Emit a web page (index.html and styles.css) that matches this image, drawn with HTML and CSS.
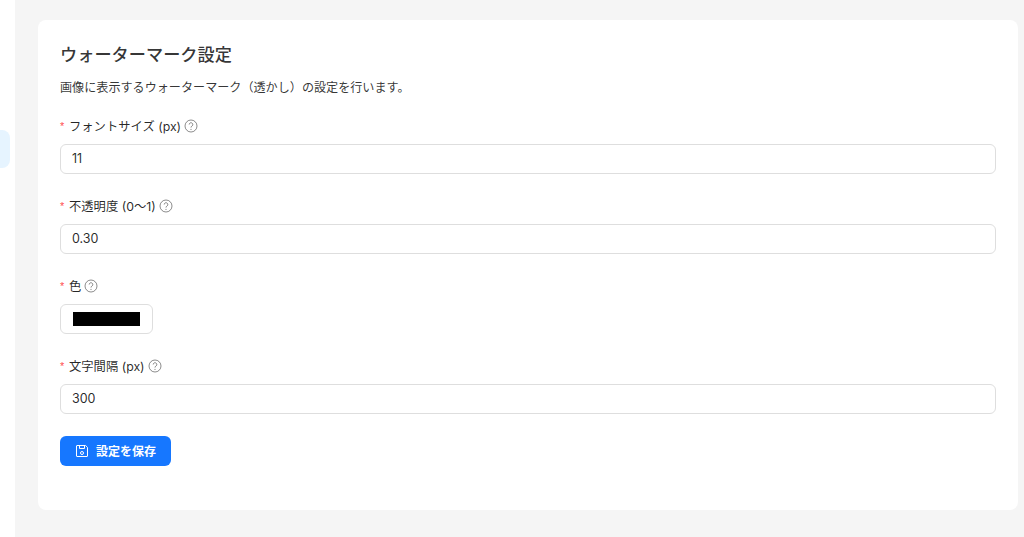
FILE: index.html
```html
<!DOCTYPE html>
<html lang="ja">
<head>
  <meta charset="UTF-8" />
  <title>ウォーターマーク設定</title>
  <link rel="stylesheet" href="styles.css">
</head>
<body>
  <div class="layout">
    <aside class="sider">
      <div class="menu-active"></div>
    </aside>
    <main class="content">
      <div class="card">
        <h2>ウォーターマーク設定</h2>
        <p class="desc">画像に表示するウォーターマーク（透かし）の設定を行います。</p>

        <div class="field">
          <div class="label">
            <span class="req">*</span>フォントサイズ (px)
            <svg class="help" viewBox="0 0 14 14"><circle cx="7" cy="7" r="6" /><path d="M5.2 5.5a1.8 1.8 0 1 1 2.7 1.6c-.6.3-.9.7-.9 1.3v.2" /><circle class="dot" cx="7" cy="10.4" r=".6" /></svg>
          </div>
          <input class="input" type="text" value="11">
        </div>

        <div class="field">
          <div class="label">
            <span class="req">*</span>不透明度 (0〜1)
            <svg class="help" viewBox="0 0 14 14"><circle cx="7" cy="7" r="6" /><path d="M5.2 5.5a1.8 1.8 0 1 1 2.7 1.6c-.6.3-.9.7-.9 1.3v.2" /><circle class="dot" cx="7" cy="10.4" r=".6" /></svg>
          </div>
          <input class="input" type="text" value="0.30">
        </div>

        <div class="field">
          <div class="label">
            <span class="req">*</span>色
            <svg class="help" viewBox="0 0 14 14"><circle cx="7" cy="7" r="6" /><path d="M5.2 5.5a1.8 1.8 0 1 1 2.7 1.6c-.6.3-.9.7-.9 1.3v.2" /><circle class="dot" cx="7" cy="10.4" r=".6" /></svg>
          </div>
          <div class="color-box"><div class="swatch"></div></div>
        </div>

        <div class="field">
          <div class="label">
            <span class="req">*</span>文字間隔 (px)
            <svg class="help" viewBox="0 0 14 14"><circle cx="7" cy="7" r="6" /><path d="M5.2 5.5a1.8 1.8 0 1 1 2.7 1.6c-.6.3-.9.7-.9 1.3v.2" /><circle class="dot" cx="7" cy="10.4" r=".6" /></svg>
          </div>
          <input class="input" type="text" value="300">
        </div>

        <button class="save">
          <svg class="save-icon" viewBox="0 0 14 14"><path d="M1.5 2a.5.5 0 0 1 .5-.5h8.6l1.9 1.9V12a.5.5 0 0 1-.5.5H2a.5.5 0 0 1-.5-.5z" /><path d="M4.5 1.5v3h5v-3" /><circle cx="7" cy="9" r="1.5" /></svg>
          設定を保存
        </button>
      </div>
    </main>
  </div>
</body>
</html>
```

FILE: styles.css
```css
* {
  margin: 0;
  padding: 0;
  box-sizing: border-box;
}
body {
  background: #f5f5f5;
  color: rgba(0,0,0,0.88);
  font-family: "Inter", "Noto Sans CJK JP", sans-serif;
  font-size: 13px;
  overflow: hidden;
}
.layout {
  display: flex;
  height: 537px;
}
.sider {
  width: 15px;
  flex-shrink: 0;
  background: #fff;
  padding-top: 130px;
}
.menu-active {
  width: 10px;
  height: 38px;
  background: #e6f4ff;
  border-radius: 0 8px 8px 0;
}
.content {
  flex: 1;
  padding: 20px 6px 27px 23px;
}
.card {
  background: #fff;
  border-radius: 8px;
  height: 490px;
  padding: 22px 22px 0 22px;
}
h2 {
  font-size: 17.2px;
  font-weight: 500;
  line-height: 26px;
  color: rgba(0,0,0,0.8);
}
.desc {
  font-size: 12.1px;
  line-height: 20px;
  margin-top: 10px;
  color: rgba(0,0,0,0.8);
}
.field {
  margin-bottom: 22px;
}
.desc + .field {
  margin-top: 18px;
}
.label {
  display: flex;
  align-items: center;
  height: 20px;
  font-size: 12.3px;
  margin-bottom: 8px;
  color: rgba(0,0,0,0.85);
}
.req {
  color: #ff4d4f;
  width: 9px;
  font-size: 11px;
  font-family: "Liberation Sans", sans-serif;
}
.help {
  width: 14px;
  height: 14px;
  margin-left: 3px;
  fill: none;
  stroke: rgba(0,0,0,0.45);
  stroke-width: 1;
}
.help .dot {
  fill: rgba(0,0,0,0.45);
  stroke: none;
}
.input {
  display: block;
  width: 100%;
  height: 30px;
  padding: 0 11px 2px;
  border: 1px solid #dedede;
  border-radius: 6px;
  background: #fff;
  font-family: inherit;
  font-size: 12.5px;
  color: rgba(0,0,0,0.85);
  outline: none;
}
.color-box {
  width: 93px;
  height: 30px;
  border: 1px solid #dedede;
  border-radius: 6px;
  padding: 7px 12px;
}
.swatch {
  height: 14px;
  background: #000;
}
.save {
  display: flex;
  align-items: center;
  gap: 7px;
  height: 30px;
  width: 111px;
  padding: 0 0 2px 15px;
  background: #1677ff;
  color: #fff;
  border: none;
  border-radius: 6px;
  font-family: inherit;
  font-size: 12px;
  font-weight: 700;
}
.save-icon {
  width: 14px;
  height: 14px;
  margin-top: 1px;
  fill: none;
  stroke: #fff;
  stroke-width: 1;
}
```
